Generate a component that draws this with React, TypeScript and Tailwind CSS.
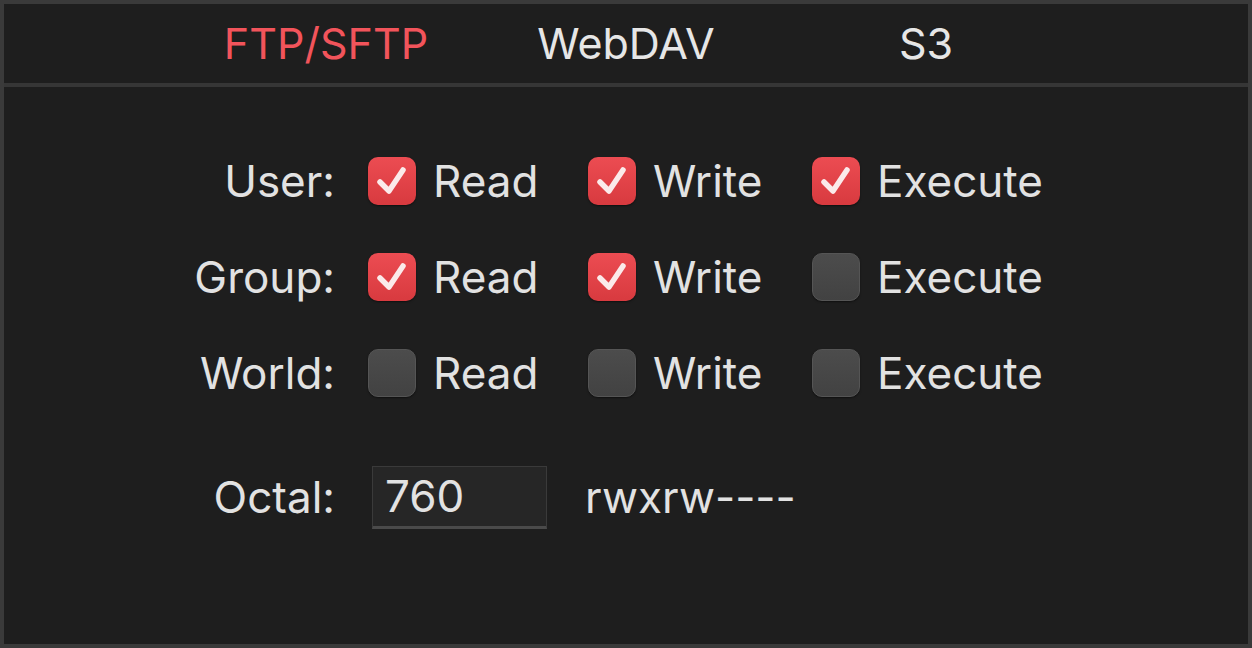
import React from 'react';

type Perm = { label: string; checked: boolean[] };

const perms: Perm[] = [
  { label: 'User:', checked: [true, true, true] },
  { label: 'Group:', checked: [true, true, false] },
  { label: 'World:', checked: [false, false, false] },
];

const columns = [
  { name: 'Read', width: 'w-[220px]' },
  { name: 'Write', width: 'w-[224px]' },
  { name: 'Execute', width: 'w-[240px]' },
];

const Checkbox: React.FC<{ checked: boolean }> = ({ checked }) =>
  checked ? (
    <div className="w-[48px] h-[48px] rounded-[10px] bg-gradient-to-b from-[#ec4c52] to-[#d83a3f] shadow-[0_1px_2px_rgba(0,0,0,0.5)] flex items-center justify-center shrink-0">
      <svg width="48" height="48" viewBox="0 0 48 48">
        <path d="M12 25 L21 34 L35 13" fill="none" stroke="#fbeaea" strokeWidth="5.5" strokeLinecap="round" strokeLinejoin="round" />
      </svg>
    </div>
  ) : (
    <div className="w-[48px] h-[48px] rounded-[10px] bg-gradient-to-b from-[#4c4c4c] to-[#424242] border border-[#555] shadow-[0_1px_2px_rgba(0,0,0,0.5)] shrink-0" />
  );

export default function App() {
  return (
    <div
      className="w-[1252px] h-[648px] bg-[#1e1e1e] border-4 border-[#3a3a3a] flex flex-col text-[#e2e2e2]"
      style={{ fontFamily: 'Inter, "Liberation Sans", sans-serif' }}
    >
      {/* tab bar */}
      <div className="h-[83px] flex items-center justify-center border-b-4 border-[#363636] shrink-0">
        {['FTP/SFTP', 'WebDAV', 'S3'].map((t, i) => (
          <div
            key={t}
            className={`w-[300px] text-center text-[43px] ${i === 0 ? 'text-[#f2545b]' : 'text-[#e6e6e6]'}`}
          >
            {t}
          </div>
        ))}
      </div>

      {/* permissions */}
      <div className="flex flex-col pt-[46px] text-[44px]">
        {perms.map((p) => (
          <div key={p.label} className="h-[96px] flex items-center">
            <div className="w-[331px] text-right">{p.label}</div>
            <div className="w-[33px]" />
            {columns.map((c, i) => (
              <div key={c.name} className={`${c.width} flex items-center gap-[17px]`}>
                <Checkbox checked={p.checked[i]} />
                <span>{c.name}</span>
              </div>
            ))}
          </div>
        ))}

        <div className="flex items-center mt-[43px]">
          <div className="w-[331px] text-right">Octal:</div>
          <div className="w-[37px]" />
          <div className="w-[175px] h-[63px] bg-[#262626] border border-[#3a3a3a] border-b-[3px] border-b-[#4a4a4a] flex items-center pl-[12px]">
            760
          </div>
          <div className="ml-[38px]">rwxrw----</div>
        </div>
      </div>
    </div>
  );
}
